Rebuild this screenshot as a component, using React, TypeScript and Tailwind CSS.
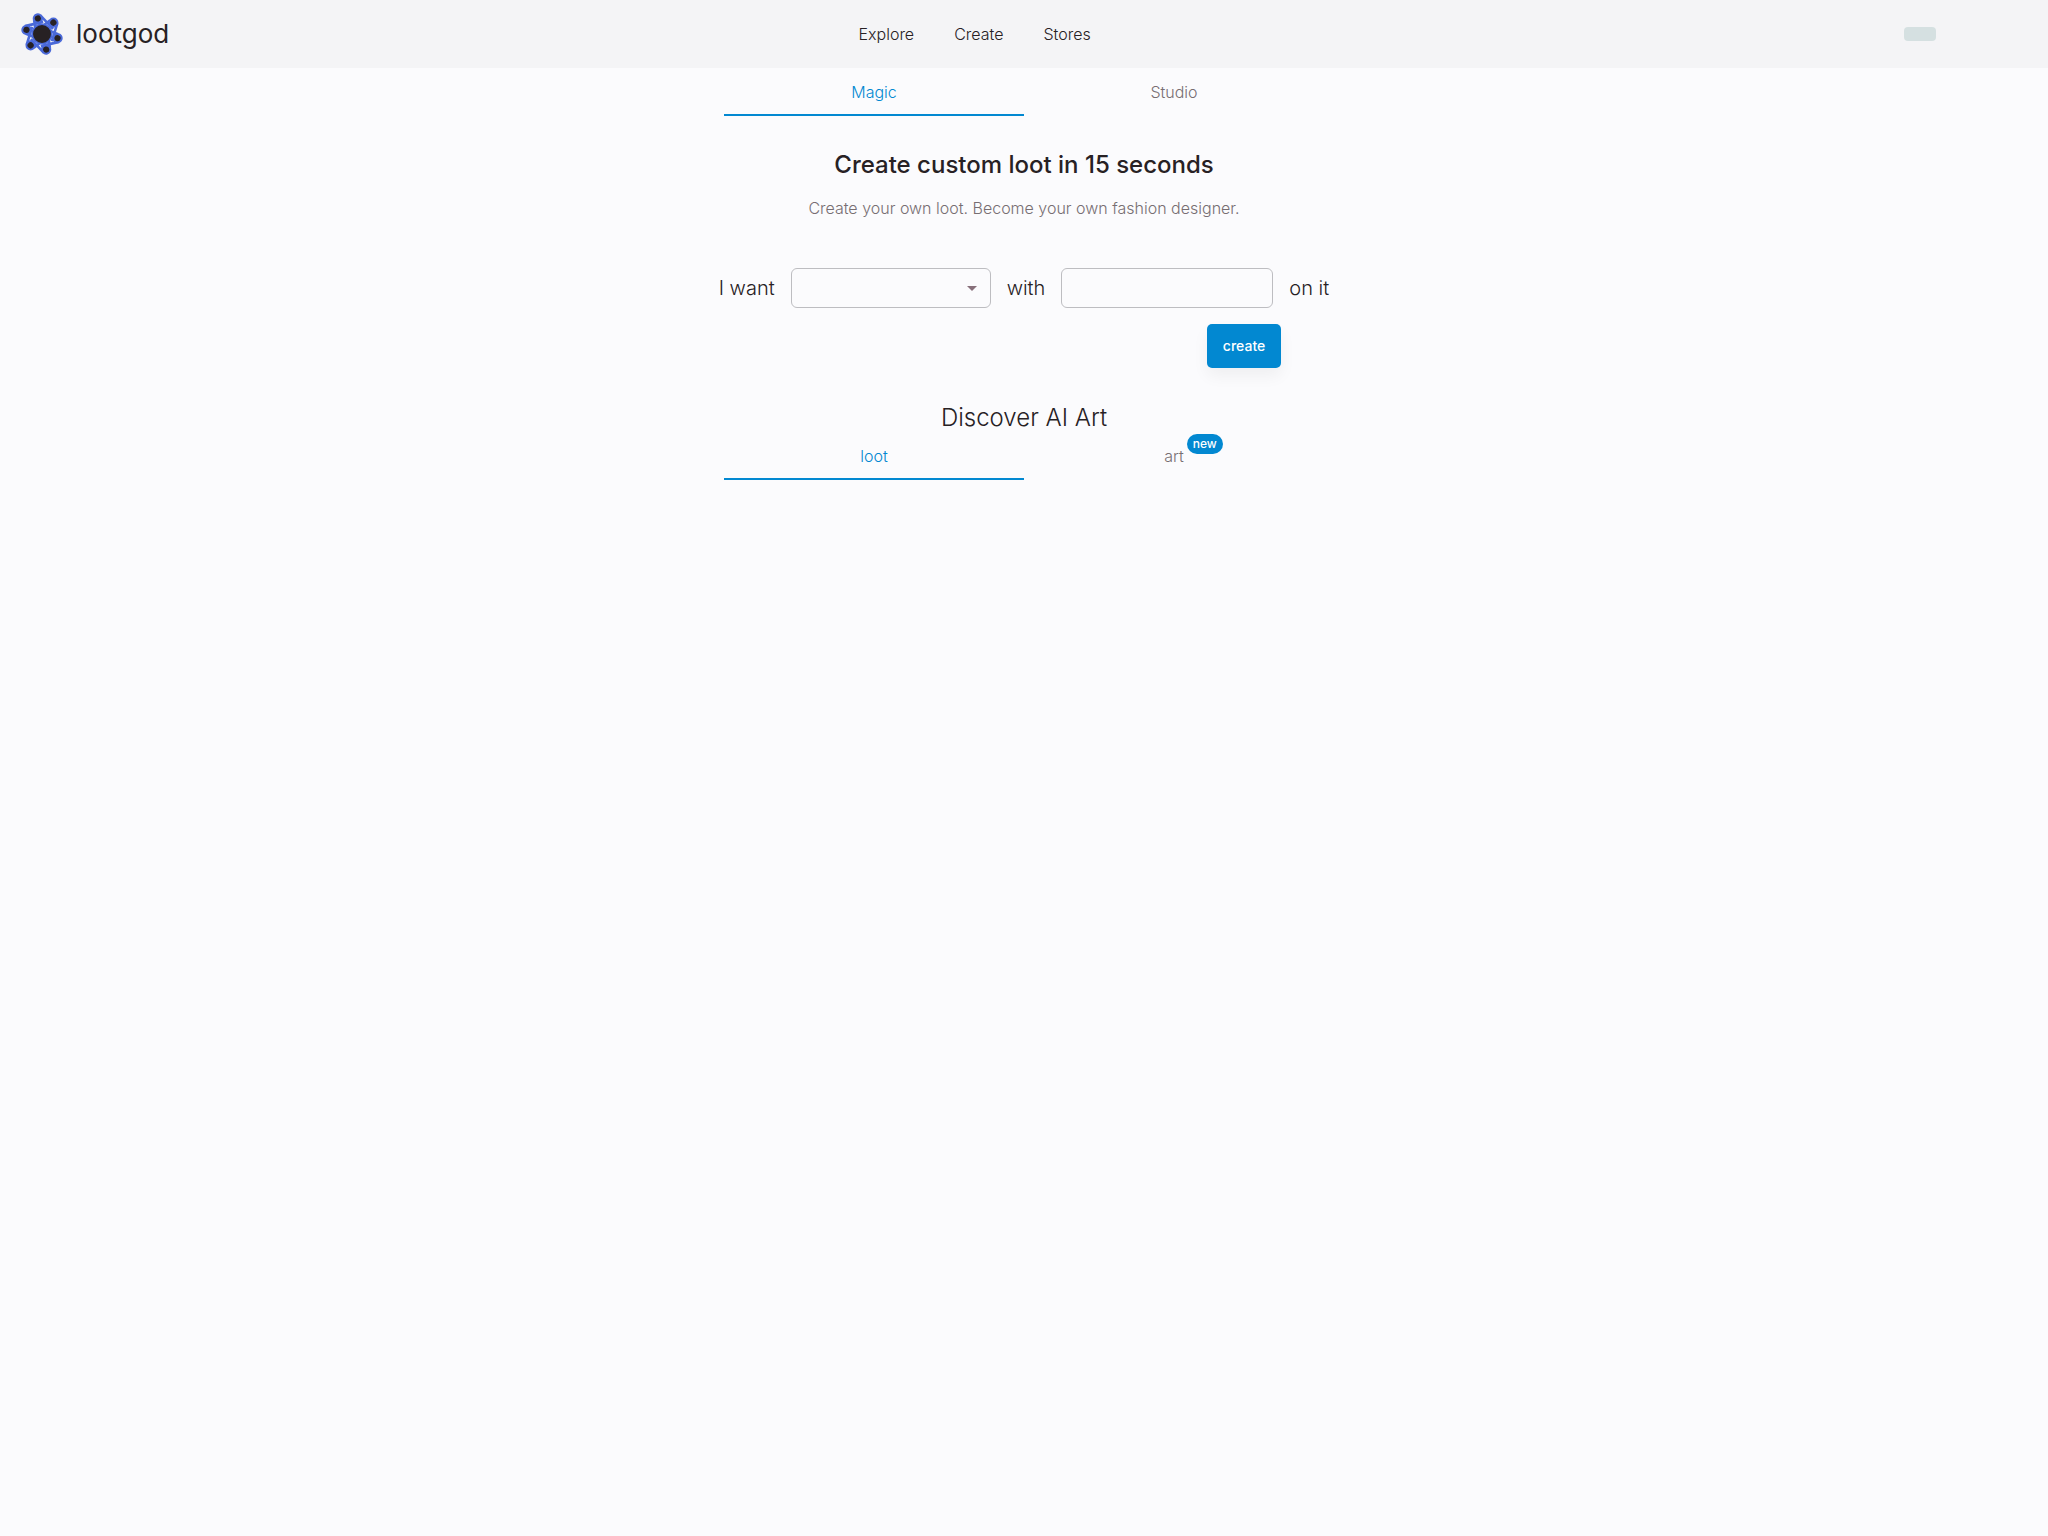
import { useState } from "react";

const navLinks = ["Explore", "Create", "Stores"];

const armAngles = [-15, 45, 105, 165, 225, 285];

function Logo() {
  return (
    <svg viewBox="-21 -21 42 42" className="size-[42px]" aria-hidden="true">
      <g fill="none" stroke="#4a69d9" strokeWidth="2.6">
        {armAngles.map((angle) => (
          <path key={angle} transform={`rotate(${angle})`} d="M3.2 -18.5L12 -2M-4 -15.5L-5 -7" />
        ))}
      </g>
      <circle r="9.8" fill="#272124" stroke="#4a69d9" strokeWidth="1.6" />
      <g fill="#272124" stroke="#4a69d9" strokeWidth="2">
        {armAngles.map((angle) => (
          <circle key={angle} transform={`rotate(${angle})`} cy="-16.1" r="4.1" />
        ))}
      </g>
    </svg>
  );
}

function Header() {
  return (
    <header className="flex h-[68px] items-center justify-between bg-[#f4f4f6]">
      <a href="#" className="flex items-center gap-[13px] pl-[21px]">
        <Logo />
        <span className="text-[26px] leading-8">lootgod</span>
      </a>
      <nav className="flex items-center gap-10">
        {navLinks.map((link) => (
          <a key={link} href="#" className="text-base font-light">
            {link}
          </a>
        ))}
      </nav>
      <div className="flex w-[268px] justify-center pl-3">
        <div className="h-[14px] w-8 rounded-sm bg-[#d5e0e1]" />
      </div>
    </header>
  );
}

type TabsProps = {
  tabs: { label: string; badge?: string }[];
};

function Tabs({ tabs }: TabsProps) {
  const [active, setActive] = useState(0);

  return (
    <div role="tablist" className="mx-auto grid w-full max-w-[600px] grid-cols-2">
      {tabs.map((tab, index) => (
        <button
          key={tab.label}
          role="tab"
          aria-selected={index === active}
          onClick={() => setActive(index)}
          className={`h-12 border-b-2 pt-[2px] text-base font-light ${
            index === active
              ? "border-[#0288d1] text-[#0288d1]"
              : "border-transparent text-[#776e72]"
          }`}
        >
          <span className="relative">
            {tab.label}
            {tab.badge && (
              <span className="absolute -top-3 left-full ml-[3px] flex h-5 items-center rounded-full bg-[#0288d1] px-[6px] text-xs font-medium text-white">
                {tab.badge}
              </span>
            )}
          </span>
        </button>
      ))}
    </div>
  );
}

function LootForm() {
  return (
    <form className="mx-auto mt-12 w-fit" onSubmit={(e) => e.preventDefault()}>
      <div className="flex items-center gap-4 text-xl font-light">
        <label htmlFor="item">I want</label>
        <div className="relative">
          <select
            id="item"
            defaultValue=""
            className="block h-10 w-[200px] appearance-none rounded-md border border-[#bdbdc1] bg-transparent px-3 text-base"
          >
            <option value=""></option>
          </select>
          <svg
            viewBox="0 0 10 5"
            className="pointer-events-none absolute top-[18px] right-[14px] h-[5px] w-[10px]"
            aria-hidden="true"
          >
            <path d="M0 0h10L5 5z" fill="#876f7a" />
          </svg>
        </div>
        <label htmlFor="prompt">with</label>
        <input
          id="prompt"
          type="text"
          className="h-10 w-[212px] rounded-md border border-[#bdbdc1] bg-transparent px-3 text-base"
        />
        <span>on it</span>
      </div>
      <div className="mt-4 flex justify-end pr-12">
        <button
          type="submit"
          className="h-11 rounded-[5px] bg-[#0288d1] px-4 text-sm font-medium text-white shadow-[0_8px_16px_rgba(0,0,0,0.05)]"
        >
          create
        </button>
      </div>
    </form>
  );
}

export default function App() {
  return (
    <div className="min-h-screen bg-[#fbfbfd] font-['Inter',sans-serif] text-[#272124]">
      <Header />
      <main>
        <Tabs tabs={[{ label: "Magic" }, { label: "Studio" }]} />
        <section className="pt-8 text-center">
          <h1 className="text-2xl leading-[34px] font-medium">Create custom loot in 15 seconds</h1>
          <p className="mt-[14px] text-base font-light text-[#776e72]">
            Create your own loot. Become your own fashion designer.
          </p>
        </section>
        <LootForm />
        <section className="pt-9">
          <h2 className="text-center text-2xl leading-7 font-light">Discover AI Art</h2>
          <Tabs tabs={[{ label: "loot" }, { label: "art", badge: "new" }]} />
        </section>
      </main>
    </div>
  );
}
